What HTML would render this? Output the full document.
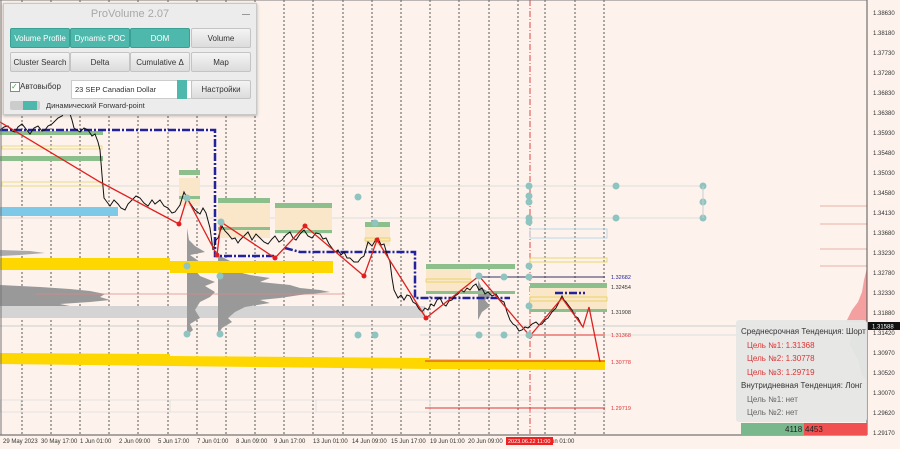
<!DOCTYPE html>
<html><head><meta charset="utf-8"><style>
body{margin:0;width:900px;height:449px;overflow:hidden;background:#fdf3ec;font-family:"Liberation Sans",sans-serif}
svg{position:absolute;left:0;top:0}
.ax{font-size:6px;fill:#333}
.panel{position:absolute;left:3px;top:3px;width:252px;height:110px;background:#ececec;border:1px solid #c8c8c8;box-shadow:0 1px 3px rgba(0,0,0,.3)}
.tt{position:absolute;left:0;top:4px;width:100%;text-align:center;font-size:11px;color:#a8a8a8}
.b{position:absolute;height:18px;width:58px;border-radius:2px;font-size:8px;text-align:center;line-height:20px;color:#333;background:linear-gradient(#f4f4f4,#dcdcdc);border:1px solid #c4c4c4}
.b.g{background:#4fb8ac;color:#fff;border-color:#3aa094}
.info{position:absolute;left:736px;top:320px;width:131px;height:102px;background:rgba(230,230,230,.95);border-radius:3px;font-size:8px;line-height:13.5px}
</style></head><body>
<svg width="900" height="449">
<rect x="0" y="0" width="867" height="434" fill="#fdf3ec"/>
<g stroke="#333" stroke-width="0.8" stroke-dasharray="2,2">
<line x1="22" y1="0" x2="22" y2="434"/><line x1="51" y1="0" x2="51" y2="434"/><line x1="80" y1="0" x2="80" y2="434"/><line x1="109" y1="0" x2="109" y2="434"/><line x1="138" y1="0" x2="138" y2="434"/><line x1="168" y1="0" x2="168" y2="434"/><line x1="197" y1="0" x2="197" y2="434"/><line x1="226" y1="0" x2="226" y2="434"/><line x1="255" y1="0" x2="255" y2="434"/><line x1="284" y1="0" x2="284" y2="434"/><line x1="313" y1="0" x2="313" y2="434"/><line x1="343" y1="0" x2="343" y2="434"/><line x1="372" y1="0" x2="372" y2="434"/><line x1="401" y1="0" x2="401" y2="434"/><line x1="430" y1="0" x2="430" y2="434"/><line x1="459" y1="0" x2="459" y2="434"/><line x1="489" y1="0" x2="489" y2="434"/><line x1="518" y1="0" x2="518" y2="434"/><line x1="545" y1="0" x2="545" y2="434"/><line x1="575" y1="0" x2="575" y2="434"/><line x1="604" y1="0" x2="604" y2="434"/>
</g>
<line x1="530" y1="0" x2="530" y2="434" stroke="#d44" stroke-width="1" stroke-dasharray="6,2,1,2"/>
<g stroke="#ddd" stroke-width="1">
<line x1="0" y1="186" x2="705" y2="186"/><line x1="0" y1="218" x2="705" y2="218"/><line x1="420" y1="335" x2="867" y2="335"/><line x1="0" y1="326" x2="867" y2="326" stroke="#ccc"/>
</g>
<g stroke="#e9b0a8" stroke-width="1"><line x1="820" y1="206" x2="867" y2="206"/><line x1="820" y1="224" x2="867" y2="224"/><line x1="820" y1="249" x2="867" y2="249"/><line x1="820" y1="266" x2="867" y2="266"/></g>
<rect x="0" y="207" width="118" height="9" fill="#7ec8e8"/>
<rect x="0" y="131" width="103" height="4" fill="#8cbf8c"/><rect x="0" y="156" width="103" height="5" fill="#8cbf8c"/>
<rect x="2" y="182" width="100" height="4" fill="none" stroke="#e8d870" stroke-width="0.8"/>
<rect x="2" y="146" width="100" height="3" fill="none" stroke="#e8d870" stroke-width="0.8"/>
<!-- grey profiles -->
<path d="M0,250 L30,251 L45,253 L20,255 L0,256Z" fill="#aaa"/>
<path d="M0,285 L40,287 L70,289 L90,291 L105,294 L100,297 L110,300 L90,302 L60,304 L70,306 L40,308 L30,311 L10,314 L0,318Z" fill="#999"/>
<rect x="0" y="306" width="425" height="12" fill="#d4d4d4"/>
<path d="M187,228 L189,240 L195,246 L205,252 L190,255 L200,262 L210,266 L195,270 L200,276 L215,282 L205,286 L215,292 L210,297 L200,302 L195,310 L200,318 L190,324 L193,330 L187,335Z" fill="#999"/>
<path d="M218,255 L228,260 L240,266 L230,270 L250,275 L270,278 L260,282 L290,285 L300,288 L320,290 L330,292 L300,295 L280,298 L260,300 L270,303 L245,307 L235,312 L228,318 L232,322 L222,328 L218,335Z" fill="#999"/>
<path d="M478,280 L482,288 L492,294 L485,300 L490,306 L482,312 L478,320Z" fill="#999"/>
<line x1="36" y1="294" x2="345" y2="294" stroke="#d88" stroke-width="0.8"/>
<path d="M0,258 L170,258 L170,261 L333,261 L333,273 L170,273 L170,270 L0,270Z" fill="#ffd700"/>
<path d="M0,353 L170,354 L170,356 L430,358 L430,359 L605,360 L605,370 L430,369 L170,366 L0,364Z" fill="#ffd700"/>
<g fill="#fae6c8">
<rect x="179" y="178" width="21" height="28"/><rect x="218" y="200" width="52" height="38"/><rect x="275" y="204" width="57" height="30"/><rect x="365" y="226" width="25" height="20"/><rect x="426" y="264" width="45" height="28"/><rect x="530" y="284" width="77" height="28"/>
</g>
<g fill="#8cbf8c">
<rect x="179" y="170" width="21" height="5"/><rect x="179" y="196" width="21" height="3"/><rect x="218" y="198" width="52" height="5"/><rect x="218" y="227" width="52" height="3"/><rect x="275" y="203" width="57" height="5"/><rect x="275" y="230" width="57" height="3"/><rect x="365" y="222" width="25" height="5"/><rect x="426" y="264" width="89" height="5"/><rect x="426" y="291" width="89" height="3"/><rect x="530" y="283" width="77" height="5"/><rect x="530" y="309" width="77" height="3"/>
</g>
<g fill="none" stroke="#e8d050" stroke-width="0.8"><rect x="530" y="258" width="77" height="4"/><rect x="530" y="297" width="77" height="4"/><rect x="365" y="238" width="25" height="3"/><rect x="426" y="279" width="45" height="3"/></g>
<g fill="none" stroke="#a8d4e8" stroke-width="0.8"><rect x="530" y="229" width="77" height="9"/></g>
<g fill="none" stroke="#ddd" stroke-width="0.8"><path d="M0,400 H605 V412 H0Z"/><line x1="21" y1="400" x2="21" y2="412"/><line x1="170" y1="400" x2="170" y2="412"/><line x1="316" y1="400" x2="316" y2="412"/><line x1="430" y1="400" x2="430" y2="412"/></g>
<g stroke="#d33" stroke-width="1">
<line x1="530" y1="335" x2="605" y2="335"/><line x1="425" y1="361" x2="605" y2="361"/><line x1="425" y1="408" x2="605" y2="408"/>
</g>
<line x1="478" y1="277" x2="605" y2="277" stroke="#336" stroke-width="1"/>
<path d="M0,130 H215 V256 H275 M285,248 L300,252 H415 V298 H510 M555,293 H585" fill="none" stroke="#22229a" stroke-width="2.5" stroke-dasharray="8,2,2,2"/>
<polyline fill="none" stroke="#111" stroke-width="1" points="0,130 4,127 8,126 12,131 15,132 18,127 22,124 26,129 30,134 34,128 38,126 42,131 45,130 48,126 52,124 55,121 58,118 62,116 66,110 70,114 72,120 74,128 80,132 84,128 88,130 92,136 95,134 98,142 100,150 102,175 104,198 107,202 110,206 114,200 118,204 121,208 125,210 128,204 132,200 136,196 140,198 144,203 148,206 152,200 155,204 160,200 164,206 168,208 172,213 175,212 180,205 184,192 188,200 192,206 195,210 200,214 203,208 206,213 210,228 213,250 216,240 218,238 222,226 225,231 228,234 232,239 235,238 238,243 240,240 244,236 248,232 252,240 256,234 260,238 264,242 268,244 272,239 275,236 279,242 282,240 286,235 290,232 293,238 296,240 300,234 304,230 308,236 312,238 316,233 320,234 323,239 326,238 329,244 332,248 335,252 338,250 341,255 344,252 347,258 350,258 354,262 358,262 361,258 364,256 368,242 372,246 375,241 378,238 381,245 384,244 387,254 390,262 392,278 394,290 398,298 401,295 404,300 407,295 410,296 413,302 416,304 419,309 422,312 425,308 428,310 431,304 434,306 437,300 440,298 443,304 446,306 449,301 452,300 455,296 458,294 461,290 464,292 467,288 470,290 473,286 476,284 479,290 482,288 485,294 488,292 492,296 496,294 500,300 504,302 507,312 510,320 513,324 516,326 519,331 522,330 525,327 528,328 532,324 536,322 539,325 542,324 545,320 548,318 552,312 556,308 559,302 562,296 564,300 566,302 569,306 572,310 575,316 578,318 580,322 582,326"/>
<polyline fill="none" stroke="#e02020" stroke-width="1.3" points="0,122 100,182 179,224 187,198 217,255 221,222 275,258 305,226 364,276 377,240 426,318 479,276 530,336 562,298 583,327 589,307 600,362"/>
<g fill="#e02020"><circle cx="179" cy="224" r="2.5"/><circle cx="217" cy="255" r="2.5"/><circle cx="275" cy="258" r="2.5"/><circle cx="305" cy="226" r="2.5"/><circle cx="364" cy="276" r="2.5"/><circle cx="377" cy="240" r="2.5"/><circle cx="426" cy="318" r="2.5"/><circle cx="530" cy="336" r="2.5"/></g>
<g fill="#8fc4c0">
<circle cx="187" cy="198" r="3.5"/><circle cx="221" cy="222" r="3.5"/><circle cx="358" cy="197" r="3.5"/><circle cx="375" cy="223" r="3.5"/><circle cx="187" cy="266" r="3.5"/><circle cx="220" cy="276" r="3.5"/><circle cx="187" cy="334" r="3.5"/><circle cx="220" cy="334" r="3.5"/><circle cx="358" cy="335" r="3.5"/><circle cx="375" cy="335" r="3.5"/><circle cx="479" cy="335" r="3.5"/><circle cx="504" cy="335" r="3.5"/><circle cx="479" cy="276" r="3.5"/><circle cx="504" cy="277" r="3.5"/><circle cx="529" cy="335" r="3.5"/><circle cx="529" cy="306" r="3.5"/><circle cx="529" cy="277" r="3.5"/><circle cx="529" cy="266" r="3.5"/><circle cx="529" cy="186" r="3.5"/><circle cx="529" cy="196" r="3.5"/><circle cx="529" cy="202" r="3.5"/><circle cx="529" cy="218" r="3.5"/><circle cx="529" cy="222" r="3.5"/><circle cx="616" cy="186" r="3.5"/><circle cx="616" cy="218" r="3.5"/><circle cx="703" cy="186" r="3.5"/><circle cx="703" cy="202" r="3.5"/><circle cx="703" cy="218" r="3.5"/>
</g>
<line x1="703" y1="186" x2="703" y2="218" stroke="#ccc"/>
<path d="M867,268 L864,280 L862,292 L858,302 L852,310 L848,318 L846,322 L867,322Z" fill="#f4a0a0"/>
<path d="M867,330 L852,333 L850,345 L858,360 L862,375 L867,380Z" fill="#9cc9a0"/>
<g font-size="5.5" font-family="Liberation Sans">
<text x="611" y="279" fill="#22229a">1.32682</text><text x="611" y="289" fill="#333">1.32454</text><text x="611" y="314" fill="#333">1.31908</text><text x="611" y="337" fill="#d33">1.31368</text><text x="611" y="364" fill="#d33">1.30778</text><text x="611" y="410" fill="#d33">1.29719</text>
</g>
<rect x="867" y="0" width="33" height="449" fill="#fdf3ec"/>
<rect x="0" y="435" width="900" height="14" fill="#fdf3ec"/>
<line x1="867" y1="0" x2="867" y2="435" stroke="#555"/>
<line x1="0" y1="0" x2="867" y2="0" stroke="#777"/>
<line x1="0" y1="435" x2="867" y2="435" stroke="#555"/>
<line x1="1" y1="0" x2="1" y2="435" stroke="#777"/>
<g class="ax">
<text x="873" y="15">1.38630</text><text x="873" y="35">1.38180</text><text x="873" y="55">1.37730</text><text x="873" y="75">1.37280</text><text x="873" y="95">1.36830</text><text x="873" y="115">1.36380</text><text x="873" y="135">1.35930</text><text x="873" y="155">1.35480</text><text x="873" y="175">1.35030</text><text x="873" y="195">1.34580</text><text x="873" y="215">1.34130</text><text x="873" y="235">1.33680</text><text x="873" y="255">1.33230</text><text x="873" y="275">1.32780</text><text x="873" y="295">1.32330</text><text x="873" y="315">1.31880</text><text x="873" y="335">1.31420</text><text x="873" y="355">1.30970</text><text x="873" y="375">1.30520</text><text x="873" y="395">1.30070</text><text x="873" y="415">1.29620</text><text x="873" y="435">1.29170</text>
</g>
<rect x="868" y="322" width="32" height="8" fill="#111"/><text x="872" y="328.5" font-size="6" fill="#fff">1.31588</text>
<g class="ax" font-size="5.5">
<text x="3" y="443">29 May 2023</text><text x="41" y="443">30 May 17:00</text><text x="80" y="443">1 Jun 01:00</text><text x="119" y="443">2 Jun 09:00</text><text x="158" y="443">5 Jun 17:00</text><text x="197" y="443">7 Jun 01:00</text><text x="236" y="443">8 Jun 09:00</text><text x="274" y="443">9 Jun 17:00</text><text x="313" y="443">13 Jun 01:00</text><text x="352" y="443">14 Jun 09:00</text><text x="391" y="443">15 Jun 17:00</text><text x="430" y="443">19 Jun 01:00</text><text x="468" y="443">20 Jun 09:00</text><text x="548" y="443">Jun 01:00</text>
</g>
<rect x="506" y="437" width="47" height="8" fill="#e22"/><text x="508" y="443" font-size="5.5" fill="#fff">2023.06.22 11:00</text>
<rect x="741" y="423" width="63" height="12" fill="#78b88c"/><rect x="804" y="423" width="63" height="12" fill="#f05050"/>
<text x="785" y="432" font-size="8" fill="#222">4118</text><text x="805" y="432" font-size="8" fill="#222">4453</text>
</svg>
<div class="info">
<div style="margin:5px 0 0 5px;color:#333">Среднесрочная Тенденция: Шорт</div>
<div style="margin-left:11px;color:#d33">Цель №1: 1.31368</div>
<div style="margin-left:11px;color:#d33">Цель №2: 1.30778</div>
<div style="margin-left:11px;color:#d33">Цель №3: 1.29719</div>
<div style="margin-left:5px;color:#333">Внутридневная Тенденция: Лонг</div>
<div style="margin-left:11px;color:#666">Цель №1: нет</div>
<div style="margin-left:11px;color:#666">Цель №2: нет</div>
</div>
<div class="panel">
<div class="tt">ProVolume 2.07</div>
<div style="position:absolute;right:6px;top:10px;width:8px;height:1px;background:#999"></div>
<div class="b g" style="left:6px;top:24px">Volume Profile</div>
<div class="b g" style="left:66px;top:24px">Dynamic POC</div>
<div class="b g" style="left:126px;top:24px">DOM</div>
<div class="b" style="left:187px;top:24px">Volume</div>
<div class="b" style="left:6px;top:48px">Cluster Search</div>
<div class="b" style="left:66px;top:48px">Delta</div>
<div class="b" style="left:126px;top:48px">Cumulative Δ</div>
<div class="b" style="left:187px;top:48px">Map</div>
<div style="position:absolute;left:6px;top:78px;width:8px;height:8px;border:1px solid #888;background:#fff;font-size:8px;line-height:8px;color:#4a4">✓</div>
<div style="position:absolute;left:16px;top:78px;font-size:8px;color:#333">Автовыбор</div>
<div style="position:absolute;left:67px;top:76px;width:116px;height:17px;background:#fff;border:1px solid #ccc;font-size:7.5px;line-height:17px;padding-left:3px;color:#333">23 SEP Canadian Dollar</div>
<div style="position:absolute;left:173px;top:76px;width:10px;height:19px;background:#4fb8ac"></div>
<div class="b" style="left:187px;top:76px;width:58px;height:17px;line-height:17px">Настройки</div>
<div style="position:absolute;left:6px;top:97px;width:30px;height:9px;background:#ccc;border-radius:2px"><div style="position:absolute;left:13px;top:0;width:14px;height:9px;background:#4fb8ac"></div></div>
<div style="position:absolute;left:42px;top:97px;font-size:7.5px;color:#333">Динамический Forward-point</div>
</div>
</body></html>
